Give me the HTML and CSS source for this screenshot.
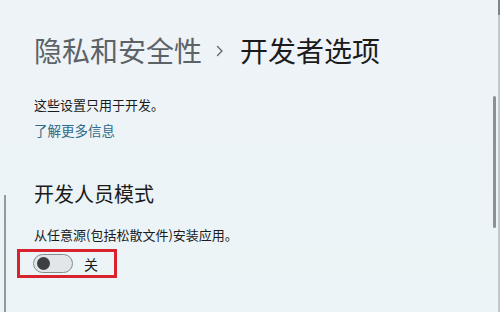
FILE: index.html
```html
<!DOCTYPE html>
<html lang="zh-CN">
<head>
<meta charset="utf-8">
<title>开发者选项</title>
<link rel="stylesheet" href="styles.css">
</head>
<body>
<div class="window">
  <div class="content">
    <h1 class="crumbs">
      <span class="parent">隐私和安全性</span>
      <svg class="sep" width="8" height="12" viewBox="0 0 8 12"><path d="M1.5 1.5 L6 6 L1.5 10.5" fill="none" stroke="#5f6468" stroke-width="1.3" stroke-linecap="round" stroke-linejoin="round"/></svg>
      <span class="current">开发者选项</span>
    </h1>
    <p class="desc">这些设置只用于开发。</p>
    <a class="link" href="#">了解更多信息</a>
    <h2 class="section">开发人员模式</h2>
    <p class="desc2">从任意源(包括松散文件)安装应用。</p>
    <div class="highlight">
      <span class="toggle"><span class="knob"></span></span>
      <span class="state">关</span>
    </div>
  </div>
  <div class="leftline"></div>
  <div class="scrollbar"></div>
  <div class="edge"></div>
</div>
</body>
</html>
```
FILE: styles.css
```css
html, body {
  margin: 0;
  padding: 0;
  height: 100%;
}
body {
  background: #edf3f7;
  font-family: "Noto Sans CJK SC", "Noto Sans", sans-serif;
  color: #1b1b1b;
  overflow: hidden;
}
.window {
  position: relative;
  width: 500px;
  height: 312px;
  background: linear-gradient(#eef3f8, #ebf4f6);
}
.content {
  display: flex;
  flex-direction: column;
  align-items: flex-start;
  padding: 30px 0 0 34px;
}
.crumbs {
  display: flex;
  align-items: center;
  margin: 0;
  font-size: 28px;
  line-height: 40px;
  font-weight: 400;
}
.parent {
  color: #5d6266;
}
.sep {
  margin: 2px 16px 0 14px;
}
.current {
  color: #1c1c1c;
}
.desc {
  margin: 25px 0 0;
  font-size: 13px;
  line-height: 20px;
  color: #1b1b1b;
}
.link {
  display: block;
  margin-top: 5px;
  font-size: 13.5px;
  line-height: 20px;
  color: #2f6b8a;
  text-decoration: none;
}
.section {
  margin: 40px 0 0;
  font-size: 20px;
  line-height: 28px;
  font-weight: 400;
  color: #1b1b1b;
}
.desc2 {
  margin: 17px 0 0;
  font-size: 13px;
  line-height: 20px;
  color: #1b1b1b;
}
.highlight {
  display: flex;
  align-items: center;
  box-sizing: border-box;
  margin: 4px 0 0 -17px;
  width: 100px;
  height: 29px;
  padding-left: 13px;
  border: 3px solid #d8222e;
}
.toggle {
  display: flex;
  align-items: center;
  box-sizing: border-box;
  width: 40px;
  height: 19px;
  padding-left: 3px;
  border: 1px solid #868b8f;
  border-radius: 10px;
  background: #e3e6e8;
}
.knob {
  width: 13px;
  height: 13px;
  border-radius: 50%;
  background: #3d3f41;
}
.state {
  margin-left: 11px;
  font-size: 14px;
  line-height: 20px;
  color: #1b1b1b;
}
.leftline {
  position: absolute;
  left: 4px;
  top: 195px;
  bottom: 0;
  width: 2px;
  background: #939a9e;
}
.scrollbar {
  position: absolute;
  left: 493px;
  top: 96px;
  width: 3px;
  height: 132px;
  border-radius: 2px;
  background: #8b9195;
}
.edge {
  position: absolute;
  left: 498px;
  top: 0;
  bottom: 0;
  width: 2px;
  background: #c3c8cb;
}
.edge::before {
  content: "";
  display: block;
  height: 15px;
  background: #7f8589;
}
```
